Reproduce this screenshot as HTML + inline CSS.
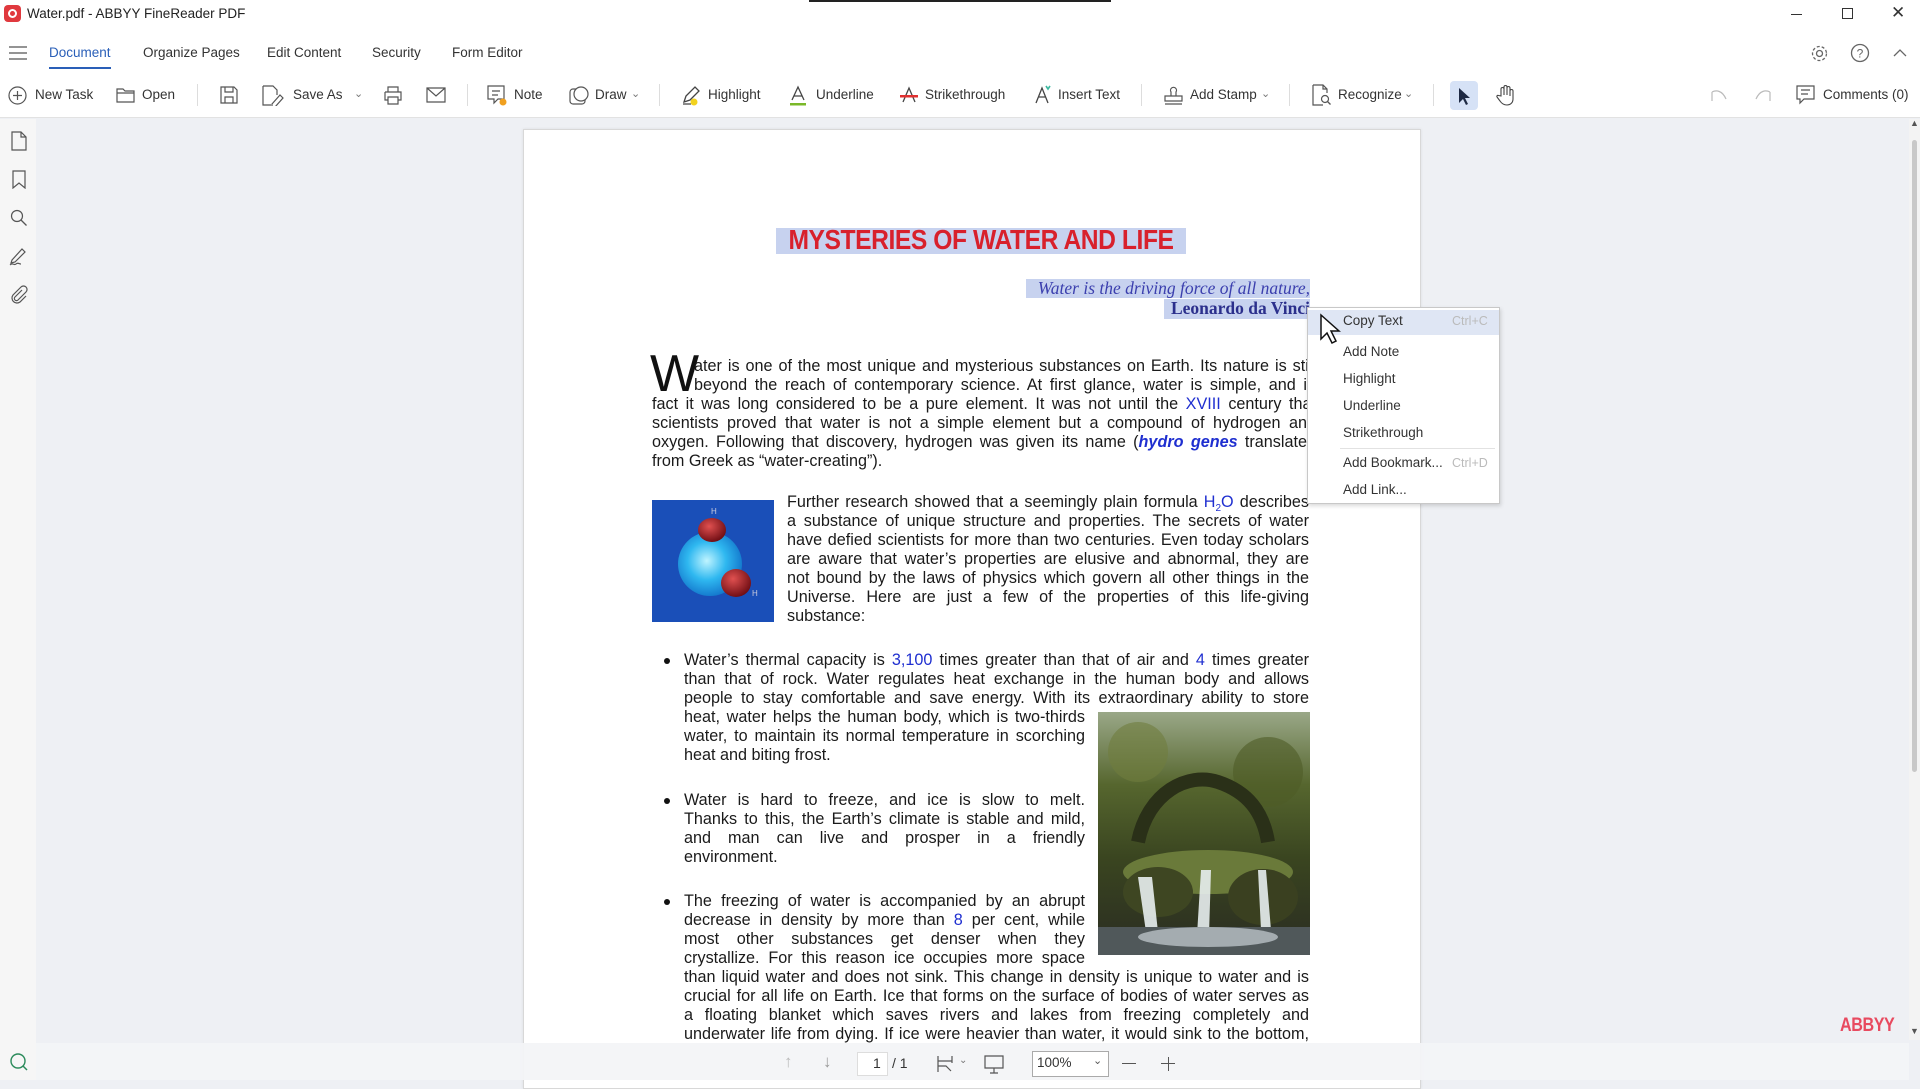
<!DOCTYPE html>
<html><head><meta charset="utf-8">
<style>
*{margin:0;padding:0;box-sizing:border-box}
body{width:1920px;height:1080px;overflow:hidden;background:#eef0f4;font-family:"Liberation Sans",sans-serif;position:relative;color:#222}
.a{position:absolute}
.ui{font-size:13.5px;color:#333;white-space:nowrap}
.ic{position:absolute}
.sep{position:absolute;top:84px;width:1px;height:22px;background:#ddd}
.ln{position:absolute;font-size:16.2px;line-height:19px;white-space:nowrap;text-align:justify;text-align-last:justify;color:#1a1a1a;font-family:"Liberation Sans",sans-serif;transform:translateY(2px)}
.b{color:#1f2fd0}
.mi{position:absolute;left:1343px;font-size:13.5px;color:#333}
.sc{position:absolute;font-size:12.5px;color:#bbb}
</style></head><body>
<!-- title bar -->
<div class="a" style="left:0;top:0;width:1920px;height:118px;background:#fff;border-bottom:1px solid #e2e2e2"></div>
<div class="a" style="left:809px;top:0;width:302px;height:2px;background:#222"></div>
<div class="a" style="left:4px;top:5px;width:17px;height:17px;border-radius:4px;background:#e0393e"></div>
<div class="a" style="left:8px;top:9px;width:9px;height:9px;border-radius:50%;border:2px solid #fff"></div>
<div class="a ui" style="left:27px;top:6px;font-size:13.5px;color:#222">Water.pdf - ABBYY FineReader PDF</div>
<div class="a" style="left:1791px;top:14px;width:11px;height:1px;background:#333"></div>
<div class="a" style="left:1842px;top:8px;width:11px;height:11px;border:1.3px solid #333"></div>
<div class="a ui" style="left:1891px;top:3px;font-size:17px;color:#333">✕</div>
<!-- tabs -->
<svg class="ic" style="left:9px;top:46px" width="18" height="14"><path d="M0 1h18M0 7h18M0 13h18" stroke="#555" stroke-width="1.3"/></svg>
<div class="a ui" style="left:49px;top:45px;color:#2a5fb8">Document</div>
<div class="a" style="left:49px;top:67px;width:62px;height:2px;background:#2a5fb8"></div>
<div class="a ui" style="left:143px;top:45px">Organize Pages</div>
<div class="a ui" style="left:267px;top:45px">Edit Content</div>
<div class="a ui" style="left:372px;top:45px">Security</div>
<div class="a ui" style="left:452px;top:45px">Form Editor</div>
<svg class="ic" style="left:1810px;top:44px" width="19" height="19"><circle cx="9.5" cy="9.5" r="3" fill="none" stroke="#666" stroke-width="1.3"/><circle cx="9.5" cy="9.5" r="7" fill="none" stroke="#666" stroke-width="1.3" stroke-dasharray="3 2"/></svg>
<svg class="ic" style="left:1850px;top:43px" width="20" height="20"><circle cx="10" cy="10" r="8.5" fill="none" stroke="#666" stroke-width="1.3"/><text x="10" y="14.5" font-size="12" text-anchor="middle" fill="#666" font-family="Liberation Sans">?</text></svg>
<svg class="ic" style="left:1893px;top:48px" width="14" height="9"><path d="M1 8L7 2L13 8" fill="none" stroke="#666" stroke-width="1.3"/></svg>
<!-- toolbar -->
<svg class="ic" style="left:8px;top:86px" width="19" height="19"><circle cx="9.5" cy="9.5" r="8.5" fill="none" stroke="#555" stroke-width="1.2"/><path d="M9.5 5v9M5 9.5h9" stroke="#555" stroke-width="1.2"/></svg>
<div class="a ui" style="left:35px;top:87px">New Task</div>
<svg class="ic" style="left:116px;top:87px" width="19" height="16"><path d="M1 2h6l2 2h9v11H1z M1 6h17" fill="none" stroke="#555" stroke-width="1.2"/></svg>
<div class="a ui" style="left:142px;top:87px">Open</div>
<div class="sep" style="left:197px"></div>
<svg class="ic" style="left:220px;top:86px" width="18" height="18"><path d="M1 1h13l3 3v13H1z M5 1v5h8V1 M5 17v-6h8v6" fill="none" stroke="#555" stroke-width="1.2"/></svg>
<svg class="ic" style="left:262px;top:85px" width="22" height="21"><path d="M1 1h10l4 4v5 M1 1v19h8 M10 19l8-9 3 3-8 9h-3z" fill="none" stroke="#555" stroke-width="1.2"/></svg>
<div class="a ui" style="left:293px;top:87px">Save As</div>
<div class="a ui" style="left:354px;top:87px;font-size:11px;color:#777">⌄</div>
<svg class="ic" style="left:383px;top:86px" width="20" height="19"><path d="M5 6V1h10v5 M2 6h16v8h-3 M5 14H2V6 M5 11h10v7H5z" fill="none" stroke="#555" stroke-width="1.2"/></svg>
<svg class="ic" style="left:426px;top:87px" width="20" height="16"><path d="M1 1h18v14H1z M1 1l9 8 9-8" fill="none" stroke="#555" stroke-width="1.2"/></svg>
<div class="sep" style="left:467px"></div>
<svg class="ic" style="left:487px;top:85px" width="21" height="21"><path d="M1 1h16v13h-6l-4 4v-4H1z M5 6h8M5 10h6" fill="none" stroke="#555" stroke-width="1.2"/><circle cx="16" cy="17" r="3.5" fill="#f0a020"/></svg>
<div class="a ui" style="left:514px;top:87px">Note</div>
<svg class="ic" style="left:569px;top:85px" width="21" height="21"><rect x="1" y="4" width="15" height="15" rx="3" fill="none" stroke="#555" stroke-width="1.2"/><circle cx="12" cy="9" r="7" fill="#fff" stroke="#555" stroke-width="1.2"/></svg>
<div class="a ui" style="left:595px;top:87px">Draw</div>
<div class="a ui" style="left:631px;top:87px;font-size:11px;color:#777">⌄</div>
<div class="sep" style="left:659px"></div>
<svg class="ic" style="left:681px;top:85px" width="22" height="21"><path d="M3 17l2-6 9-9 4 4-9 9z M2 19h8" fill="none" stroke="#444" stroke-width="1.3"/><circle cx="13" cy="17" r="3.5" fill="#f2d21e"/></svg>
<div class="a ui" style="left:708px;top:87px">Highlight</div>
<svg class="ic" style="left:789px;top:85px" width="18" height="21"><path d="M3 15L9 2l6 13 M5 11h8" fill="none" stroke="#444" stroke-width="1.3"/><rect x="1" y="18" width="16" height="2.5" fill="#7ab829"/></svg>
<div class="a ui" style="left:816px;top:87px">Underline</div>
<svg class="ic" style="left:900px;top:85px" width="18" height="20"><path d="M3 17L9 3l6 14" fill="none" stroke="#444" stroke-width="1.3"/><rect x="0" y="10" width="18" height="2.5" fill="#e03030"/></svg>
<div class="a ui" style="left:925px;top:87px">Strikethrough</div>
<svg class="ic" style="left:1034px;top:84px" width="18" height="21"><path d="M2 19L8 4l6 15 M4.5 13h7" fill="none" stroke="#444" stroke-width="1.3"/><path d="M12 2l2 3 2-3" fill="none" stroke="#3cb8a0" stroke-width="1.6"/></svg>
<div class="a ui" style="left:1058px;top:87px">Insert Text</div>
<div class="sep" style="left:1141px"></div>
<svg class="ic" style="left:1163px;top:85px" width="21" height="21"><path d="M8 11V7a3 3 0 1 1 5 0v4 M2 11h17v5H2z M2 19h17" fill="none" stroke="#555" stroke-width="1.2"/></svg>
<div class="a ui" style="left:1190px;top:87px">Add Stamp</div>
<div class="a ui" style="left:1261px;top:87px;font-size:11px;color:#777">⌄</div>
<div class="sep" style="left:1289px"></div>
<svg class="ic" style="left:1312px;top:84px" width="20" height="22"><path d="M1 1h10l4 4v4 M1 1v20h10 M11 1v4h4" fill="none" stroke="#555" stroke-width="1.2"/><circle cx="13" cy="15" r="3.5" fill="none" stroke="#555" stroke-width="1.2"/><path d="M15.5 17.5l3 3" stroke="#555" stroke-width="1.3"/></svg>
<div class="a ui" style="left:1338px;top:87px">Recognize</div>
<div class="a ui" style="left:1404px;top:87px;font-size:11px;color:#777">⌄</div>
<div class="sep" style="left:1433px"></div>
<div class="a" style="left:1450px;top:81px;width:28px;height:29px;border-radius:4px;background:#d6e2f6"></div>
<svg class="ic" style="left:1458px;top:87px" width="13" height="18"><path d="M1 1v15l4-4 3 6 2-1-3-6h5z" fill="#1e2a44"/></svg>
<svg class="ic" style="left:1496px;top:84px" width="20" height="22"><path d="M5 12V5a1.5 1.5 0 0 1 3 0v6V3a1.5 1.5 0 0 1 3 0v8V4a1.5 1.5 0 0 1 3 0v8V7a1.5 1.5 0 0 1 3 0v8c0 4-3 6-6 6s-5-1-7-4l-3-4c-.5-1 .5-2 1.5-1.5z" fill="none" stroke="#444" stroke-width="1.1"/></svg>
<svg class="ic" style="left:1710px;top:89px" width="18" height="13"><path d="M2 12V3 M2 3c4-2 10-2 14 7" fill="none" stroke="#bbb" stroke-width="1.2"/></svg>
<svg class="ic" style="left:1754px;top:89px" width="18" height="13"><path d="M16 12V3 M16 3c-4-2-10-2-14 7" fill="none" stroke="#bbb" stroke-width="1.2"/></svg>
<svg class="ic" style="left:1796px;top:85px" width="19" height="20"><path d="M1 1h17v13H8l-4 4v-4H1z M5 5h9M5 9h7" fill="none" stroke="#555" stroke-width="1.2"/></svg>
<div class="a ui" style="left:1823px;top:87px">Comments (0)</div>
<!-- left sidebar -->
<div class="a" style="left:0;top:119px;width:36px;height:961px;background:#f6f6f6"></div>
<svg class="ic" style="left:11px;top:131px" width="16" height="20"><path d="M1 1h9l5 5v13H1z M10 1v5h5" fill="none" stroke="#555" stroke-width="1.2"/></svg>
<svg class="ic" style="left:12px;top:170px" width="14" height="19"><path d="M1 1h12v17l-6-5-6 5z" fill="none" stroke="#555" stroke-width="1.2"/></svg>
<svg class="ic" style="left:10px;top:209px" width="18" height="18"><circle cx="7" cy="7" r="5.5" fill="none" stroke="#555" stroke-width="1.2"/><path d="M11 11l5.5 5.5" stroke="#555" stroke-width="1.3"/></svg>
<svg class="ic" style="left:9px;top:247px" width="20" height="19"><path d="M3 13L13 2l3 3L6 15l-4 1z M1 18c3-3 4 1 6-1s3 0 5 0" fill="none" stroke="#555" stroke-width="1.2"/></svg>
<svg class="ic" style="left:10px;top:285px" width="18" height="20"><path d="M12 5L5 12a2 2 0 0 0 3 3l8-8a3.5 3.5 0 0 0-5-5L3 10a5 5 0 0 0 7 7l6-6" fill="none" stroke="#555" stroke-width="1.2"/></svg>
<svg class="ic" style="left:9px;top:1052px" width="20" height="20"><circle cx="9" cy="9" r="7" fill="none" stroke="#2a8a5a" stroke-width="1.4"/><path d="M14 14l4 4" stroke="#2a8a5a" stroke-width="1.5"/></svg>
<!-- scrollbar -->
<div class="a" style="left:1909px;top:119px;width:11px;height:921px;background:#f3f3f3"></div>
<div class="a" style="left:1912px;top:140px;width:5px;height:632px;background:#c8c8c8;border-radius:3px"></div>
<div class="a ui" style="left:1910px;top:118px;font-size:9px;color:#555">▲</div>
<div class="a ui" style="left:1910px;top:1026px;font-size:9px;color:#555">▼</div>
<!-- page -->
<div class="a" style="left:523px;top:129px;width:898px;height:960px;background:#fff;border:1px solid #d8d8d8;box-shadow:0 0 3px rgba(0,0,0,.08)"></div>
<div class="a" style="left:776px;top:228px;width:410px;height:26px;background:#c7d2ef"></div>
<div class="a" style="left:760px;top:224px;width:442px;text-align:center;font-size:28px;font-weight:bold;color:#d8202c;white-space:nowrap;letter-spacing:-0.5px;transform:scaleX(.88)">MYSTERIES OF WATER AND LIFE</div>
<div class="a" style="left:1026px;top:279px;width:284px;height:19px;background:#c7d2ef"></div>
<div class="a" style="left:1164px;top:299px;width:146px;height:20px;background:#c7d2ef"></div>
<div class="a" style="left:1000px;top:278px;width:310px;text-align:right;font-family:'Liberation Serif',serif;font-style:italic;font-size:17.5px;color:#3b3fae;white-space:nowrap">Water is the driving force of all nature,</div>
<div class="a" style="left:1000px;top:298px;width:310px;text-align:right;font-family:'Liberation Serif',serif;font-weight:bold;font-size:17.5px;color:#2b2f8c;white-space:nowrap">Leonardo da Vinci</div>
<!-- drop cap -->
<div class="a" style="left:650px;top:348px;font-size:52px;line-height:52px;color:#111">W</div>
<div class="ln" style="left:694px;top:355px;width:622px">ater is one of the most unique and mysterious substances on Earth. Its nature is still</div>
<div class="ln" style="left:694px;top:374px;width:622px">beyond the reach of contemporary science. At first glance, water is simple, and in</div>
<div class="ln" style="left:652px;top:393px;width:664px">fact it was long considered to be a pure element. It was not until the <span class="b">XVIII</span> century that</div>
<div class="ln" style="left:652px;top:412px;width:664px">scientists proved that water is not a simple element but a compound of hydrogen and</div>
<div class="ln" style="left:652px;top:431px;width:664px">oxygen. Following that discovery, hydrogen was given its name (<b class="b"><i>hydro genes</i></b> translated</div>
<div class="ln" style="left:652px;top:450px;text-align-last:left">from Greek as “water-creating”).</div>
<!-- molecule image -->
<svg class="a" style="left:652px;top:500px" width="122" height="122"><defs><radialGradient id="g1" cx=".45" cy=".45" r=".6"><stop offset="0" stop-color="#bff4ff"/><stop offset=".5" stop-color="#2fb8f0"/><stop offset="1" stop-color="#1070c8"/></radialGradient><radialGradient id="g2" cx=".4" cy=".35" r=".7"><stop offset="0" stop-color="#e05050"/><stop offset="1" stop-color="#6a0a10"/></radialGradient></defs><rect width="122" height="122" fill="#1a4fb8"/><circle cx="58" cy="64" r="32" fill="url(#g1)"/><ellipse cx="60" cy="30" rx="14" ry="12" fill="url(#g2)"/><ellipse cx="84" cy="83" rx="15" ry="14" fill="url(#g2)"/><text x="59" y="14" font-size="8" fill="#ccd" font-family="Liberation Sans">H</text><text x="100" y="96" font-size="8" fill="#ccd" font-family="Liberation Sans">H</text></svg>
<div class="ln" style="left:787px;top:491px;width:522px">Further research showed that a seemingly plain formula <span class="b">H<sub style="font-size:10px">2</sub>O</span> describes</div>
<div class="ln" style="left:787px;top:510px;width:522px">a substance of unique structure and properties. The secrets of water</div>
<div class="ln" style="left:787px;top:529px;width:522px">have defied scientists for more than two centuries. Even today scholars</div>
<div class="ln" style="left:787px;top:548px;width:522px">are aware that water’s properties are elusive and abnormal, they are</div>
<div class="ln" style="left:787px;top:567px;width:522px">not bound by the laws of physics which govern all other things in the</div>
<div class="ln" style="left:787px;top:586px;width:522px">Universe. Here are just a few of the properties of this life-giving</div>
<div class="ln" style="left:787px;top:605px;text-align-last:left">substance:</div>
<!-- bullets -->
<div class="a" style="left:664px;top:658px;width:6px;height:6px;border-radius:50%;background:#111"></div>
<div class="ln" style="left:684px;top:649px;width:625px">Water’s thermal capacity is <span class="b">3,100</span> times greater than that of air and <span class="b">4</span> times greater</div>
<div class="ln" style="left:684px;top:668px;width:625px">than that of rock. Water regulates heat exchange in the human body and allows</div>
<div class="ln" style="left:684px;top:687px;width:625px">people to stay comfortable and save energy. With its extraordinary ability to store</div>
<div class="ln" style="left:684px;top:706px;width:401px">heat, water helps the human body, which is two-thirds</div>
<div class="ln" style="left:684px;top:725px;width:401px">water, to maintain its normal temperature in scorching</div>
<div class="ln" style="left:684px;top:744px;text-align-last:left">heat and biting frost.</div>
<div class="a" style="left:664px;top:798px;width:6px;height:6px;border-radius:50%;background:#111"></div>
<div class="ln" style="left:684px;top:789px;width:401px">Water is hard to freeze, and ice is slow to melt.</div>
<div class="ln" style="left:684px;top:808px;width:401px">Thanks to this, the Earth’s climate is stable and mild,</div>
<div class="ln" style="left:684px;top:827px;width:401px">and man can live and prosper in a friendly</div>
<div class="ln" style="left:684px;top:846px;text-align-last:left">environment.</div>
<div class="a" style="left:664px;top:899px;width:6px;height:6px;border-radius:50%;background:#111"></div>
<div class="ln" style="left:684px;top:890px;width:401px">The freezing of water is accompanied by an abrupt</div>
<div class="ln" style="left:684px;top:909px;width:401px">decrease in density by more than <span class="b">8</span> per cent, while</div>
<div class="ln" style="left:684px;top:928px;width:401px">most other substances get denser when they</div>
<div class="ln" style="left:684px;top:947px;width:401px">crystallize. For this reason ice occupies more space</div>
<div class="ln" style="left:684px;top:966px;width:625px">than liquid water and does not sink. This change in density is unique to water and is</div>
<div class="ln" style="left:684px;top:985px;width:625px">crucial for all life on Earth. Ice that forms on the surface of bodies of water serves as</div>
<div class="ln" style="left:684px;top:1004px;width:625px">a floating blanket which saves rivers and lakes from freezing completely and</div>
<div class="ln" style="left:684px;top:1023px;width:625px">underwater life from dying. If ice were heavier than water, it would sink to the bottom,</div>
<!-- waterfall -->
<svg class="a" style="left:1098px;top:712px" width="212" height="243"><defs><linearGradient id="w" x1="0" y1="0" x2="0" y2="1"><stop offset="0" stop-color="#9aa888"/><stop offset=".3" stop-color="#56662e"/><stop offset=".6" stop-color="#3a4520"/><stop offset="1" stop-color="#2a2c22"/></linearGradient></defs><rect width="212" height="243" fill="url(#w)"/><circle cx="40" cy="40" r="30" fill="#6f7d3e" opacity=".6"/><circle cx="170" cy="60" r="35" fill="#4e5c26" opacity=".6"/><path d="M40 130c10-50 50-70 80-60s45 30 50 60" fill="none" stroke="#2a3018" stroke-width="14"/><ellipse cx="110" cy="160" rx="85" ry="22" fill="#6a7a3a"/><ellipse cx="60" cy="180" rx="35" ry="25" fill="#3e4622"/><ellipse cx="165" cy="185" rx="35" ry="28" fill="#3a4020"/><path d="M40 165l8 55h12l-6-55z M103 158l-4 65h12l2-65z M160 158l3 60h10l-5-60z" fill="#e8eef0" opacity=".9"/><rect y="215" width="212" height="28" fill="#50585a"/><ellipse cx="110" cy="225" rx="70" ry="10" fill="#c8d0d4" opacity=".7"/></svg>
<!-- context menu -->
<div class="a" style="left:1307px;top:307px;width:193px;height:197px;background:#fff;border:1px solid #c8c8c8;box-shadow:1px 2px 4px rgba(0,0,0,.15)"></div>
<div class="a" style="left:1308px;top:310px;width:191px;height:25px;background:#dfe6f4"></div>
<div class="mi" style="top:313px">Copy Text</div><div class="sc" style="left:1452px;top:314px">Ctrl+C</div>
<div class="mi" style="top:344px">Add Note</div>
<div class="mi" style="top:371px">Highlight</div>
<div class="mi" style="top:398px">Underline</div>
<div class="mi" style="top:425px">Strikethrough</div>
<div class="a" style="left:1340px;top:448px;width:155px;height:1px;background:#e2e2e2"></div>
<div class="mi" style="top:455px">Add Bookmark...</div><div class="sc" style="left:1452px;top:456px">Ctrl+D</div>
<div class="mi" style="top:482px">Add Link...</div>
<svg class="a" style="left:1319px;top:313px" width="22" height="32"><path d="M2 2v24l6-6 5 10 4-2-5-10h8z" fill="#fff" stroke="#111" stroke-width="1.5"/></svg>
<!-- ABBYY -->
<div class="a" style="left:1840px;top:1015px;font-size:19px;font-weight:bold;color:#e84a5f;letter-spacing:-0.5px;transform:scaleX(.85);transform-origin:left">ABBYY</div>
<!-- bottom bar -->
<div class="a" style="left:36px;top:1043px;width:1873px;height:37px;background:rgba(243,244,247,.94)"></div>
<div class="a ui" style="left:784px;top:1052px;font-size:17px;color:#bbb">↑</div>
<div class="a ui" style="left:823px;top:1052px;font-size:17px;color:#999">↓</div>
<div class="a" style="left:857px;top:1052px;width:31px;height:24px;background:#fff;border:1px solid #ddd"></div>
<div class="a ui" style="left:873px;top:1055px;font-size:14px">1</div>
<div class="a ui" style="left:892px;top:1055px;font-size:14px">/ 1</div>
<svg class="ic" style="left:937px;top:1055px" width="16" height="18"><path d="M1 1v16 M15 1v7 M1 6h14 M1 11h8l5 5" fill="none" stroke="#555" stroke-width="1.2"/></svg>
<div class="a ui" style="left:959px;top:1055px;font-size:10px;color:#777">⌄</div>
<svg class="ic" style="left:984px;top:1055px" width="20" height="19"><path d="M1 1h18v12H1z M10 13v5 M6 18h8" fill="none" stroke="#555" stroke-width="1.2"/></svg>
<div class="a" style="left:1032px;top:1051px;width:77px;height:26px;background:#fff;border:1px solid #aaa"></div>
<div class="a ui" style="left:1037px;top:1055px;font-size:13.5px">100%</div>
<div class="a ui" style="left:1093px;top:1054px;font-size:11px;color:#555">⌄</div>
<div class="a" style="left:1122px;top:1063px;width:14px;height:1.3px;background:#555"></div>
<div class="a" style="left:1161px;top:1063px;width:14px;height:1.3px;background:#555"></div>
<div class="a" style="left:1167.5px;top:1057px;width:1.3px;height:14px;background:#555"></div>
</body></html>
